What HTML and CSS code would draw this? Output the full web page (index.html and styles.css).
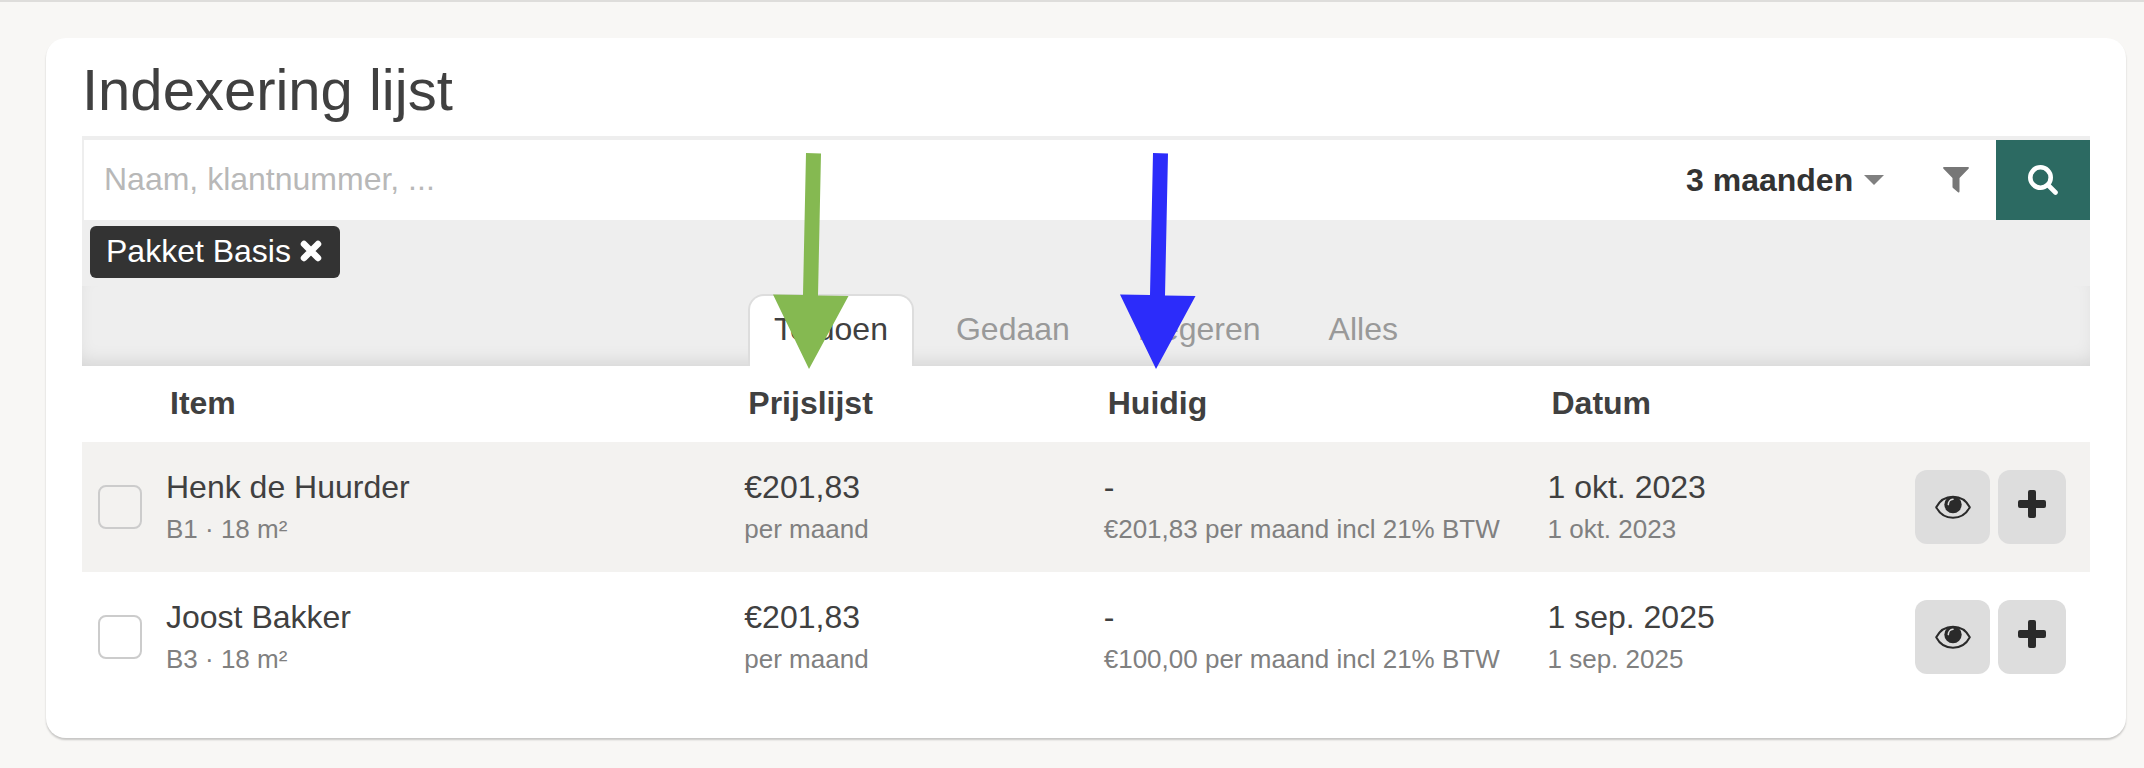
FILE: index.html
```html
<!DOCTYPE html>
<html lang="nl">
  <head>
    <meta charset="UTF-8" />
    <meta name="viewport" content="width=device-width, initial-scale=1.0" />
    <title>Indexering lijst</title>
    <link rel="stylesheet" href="styles.css">
  </head>
  <body>
    <!-- shared icons -->
    <svg class="sprite" aria-hidden="true">
      <symbol id="eye" viewBox="0 0 36 24">
        <path d="M1.2 12.2C8.500-1.900 27.500-1.900 34.800 12.200C27.500 26.200 8.500 26.200 1.200 12.200Z" fill="none" stroke="currentColor" stroke-width="2" stroke-linejoin="round" />
        <circle cx="18" cy="9.600" r="8.700" fill="currentColor" />
        <path d="M13.300 9.600C13.300 6.800 15.200 4.500 18 4.300" fill="none" stroke="#ddd" stroke-width="1.600" stroke-linecap="round" />
      </symbol>
      <symbol id="plus" viewBox="0 0 28 28">
        <path d="M12 0h4a2 2 0 0 1 2 2v8h8a2 2 0 0 1 2 2v4a2 2 0 0 1-2 2h-8v8a2 2 0 0 1-2 2h-4a2 2 0 0 1-2-2v-8H2a2 2 0 0 1-2-2v-4a2 2 0 0 1 2-2h8V2a2 2 0 0 1 2-2z" fill="currentColor" />
      </symbol>
    </svg>

    <main class="card">
      <h1>Indexering lijst</h1>

      <form class="search">
        <input class="search-input" type="text" placeholder="Naam, klantnummer, ..." aria-label="Zoeken" />
        <div class="period">
          <select aria-label="Periode">
            <option>3 maanden</option>
            <option>6 maanden</option>
          </select>
          <svg width="20" height="10" viewBox="0 0 20 10"><path d="M0 0h20L10 10z" fill="#808080" /></svg>
        </div>
        <button class="filter-btn" type="button" aria-label="Filter">
          <svg width="26" height="26" viewBox="0 0 26 26">
            <path d="M1 0h24c1 0 1.200 1 .5 1.700L16.500 11v13.600c0 1-.8 1.300-1.500.700L10 21c-.4-.4-.5-.6-.5-1.200V11L.5 1.700C-.2 1 0 0 1 0z" fill="#777" />
          </svg>
        </button>
        <button class="search-btn" type="submit" aria-label="Zoek">
          <svg width="30" height="30" viewBox="0 0 30 30" fill="none" stroke="#fff">
            <circle cx="12.500" cy="12.500" r="10.200" stroke-width="4.600" />
            <path d="M20 20l7.500 7.500" stroke-width="4.600" stroke-linecap="round" />
          </svg>
        </button>
      </form>

      <div class="tags">
        <button class="tag" type="button">
          Pakket Basis
          <svg width="22" height="22" viewBox="0 0 22 22">
            <path d="M4 4l14 14M18 4L4 18" stroke="#fff" stroke-width="6.500" stroke-linecap="round" />
          </svg>
        </button>
      </div>

      <nav class="tabs">
        <a class="tab active" href="#">Te doen</a>
        <a class="tab" href="#">Gedaan</a>
        <a class="tab" href="#">Negeren</a>
        <a class="tab" href="#">Alles</a>
      </nav>

      <table>
        <thead>
          <tr>
            <th class="col-check"></th>
            <th class="col-item">Item</th>
            <th class="col-price">
              Prijslijst
              <svg class="arrow green" width="76" height="218" viewBox="0 0 76 218">
                <path d="M33 1l15 .5-3 142 30.500.5L36 217 0 142.500l30 .5z" />
              </svg>
            </th>
            <th class="col-current">
              Huidig
              <svg class="arrow blue" width="76" height="218" viewBox="0 0 76 218">
                <path d="M33 1l15 .5-3 142 30.500.5L36 217 0 142.500l30 .5z" />
              </svg>
            </th>
            <th class="col-date">Datum</th>
            <th></th>
          </tr>
        </thead>
        <tbody>
          <tr>
            <td><input type="checkbox" aria-label="Henk de Huurder" /></td>
            <td>Henk de Huurder<small>B1 · 18 m²</small></td>
            <td>€201,83<small>per maand</small></td>
            <td>-<small>€201,83 per maand incl 21% BTW</small></td>
            <td>1 okt. 2023<small>1 okt. 2023</small></td>
            <td>
              <div class="actions">
                <button class="btn-view" type="button" aria-label="Bekijken"><svg width="36" height="24"><use href="#eye" /></svg></button>
                <button class="btn-add" type="button" aria-label="Toevoegen"><svg width="28" height="28"><use href="#plus" /></svg></button>
              </div>
            </td>
          </tr>
          <tr>
            <td><input type="checkbox" aria-label="Joost Bakker" /></td>
            <td>Joost Bakker<small>B3 · 18 m²</small></td>
            <td>€201,83<small>per maand</small></td>
            <td>-<small>€100,00 per maand incl 21% BTW</small></td>
            <td>1 sep. 2025<small>1 sep. 2025</small></td>
            <td>
              <div class="actions">
                <button class="btn-view" type="button" aria-label="Bekijken"><svg width="36" height="24"><use href="#eye" /></svg></button>
                <button class="btn-add" type="button" aria-label="Toevoegen"><svg width="28" height="28"><use href="#plus" /></svg></button>
              </div>
            </td>
          </tr>
        </tbody>
      </table>
    </main>
  </body>
</html>
```
FILE: styles.css
```css
* {
  box-sizing: border-box;
}

body {
  margin: 0;
  padding: 36px 18px 30px 46px;
  border-top: 2px solid #dedddb;
  background-color: #f8f7f5;
  color: #404040;
  font-family: "Liberation Sans", Arial, sans-serif;
  font-size: 32px;
  line-height: 44px;
}

button,
input,
select {
  margin: 0;
  padding: 0;
  border: 0;
  background: none;
  font: inherit;
  color: inherit;
}

svg {
  display: block;
}

.sprite {
  position: absolute;
  width: 0;
  height: 0;
}

.card {
  padding: 16px 36px 36px;
  border-radius: 20px;
  background-color: #fff;
  box-shadow: 0 2px 2px rgba(0, 0, 0, 0.2);
}

h1 {
  margin: 0 0 10px;
  font-size: 58px;
  font-weight: 400;
  line-height: 72px;
}

/* search bar */
.search {
  display: flex;
  align-items: stretch;
  height: 84px;
  border-top: 4px solid #eee;
  border-left: 2px solid #eee;
}

.search-input {
  flex: 1;
  min-width: 0;
  padding: 0 20px 2px;
  outline: none;
}

.search-input::placeholder {
  color: #b8b8b8;
}

.period {
  display: flex;
  align-items: center;
  gap: 10px;
  padding-right: 32px;
}

.period select {
  appearance: none;
  color: #333;
  font-weight: 700;
}

.filter-btn {
  display: flex;
  align-items: center;
  justify-content: center;
  width: 80px;
}

.search-btn {
  display: flex;
  align-items: center;
  justify-content: center;
  width: 94px;
  background-color: #2c6a62;
}

.tags {
  padding: 6px 8px 8px;
  background-color: #eee;
}

.tag {
  display: flex;
  align-items: center;
  gap: 9px;
  height: 52px;
  padding: 0 18px 2px 16px;
  border-radius: 6px;
  background-color: #333;
  color: #fff;
}

.tabs {
  display: flex;
  justify-content: center;
  gap: 16px;
  padding-top: 8px;
  background-color: #eee;
  box-shadow: inset 0 -10px 20px -8px rgba(0, 0, 0, 0.13);
}

.tab {
  padding: 11px 24px 15px;
  border: 2px solid transparent;
  border-bottom: 0;
  border-radius: 16px 16px 0 0;
  color: #999;
  text-decoration: none;
}

.tab.active {
  border-color: #ddd;
  background-color: #fff;
  color: #404040;
}

/* list */
table {
  width: 100%;
  table-layout: fixed;
  border-collapse: collapse;
}

th {
  position: relative;
  padding: 15px 12px 17px;
  text-align: left;
}

td {
  padding: 23px 8px;
  white-space: nowrap;
}

td:first-child {
  padding-left: 16px;
}

td:last-child {
  padding: 0 24px 0 0;
}

tbody tr:nth-child(odd) {
  background-color: #f3f2f0;
}

.col-check {
  width: 76px;
}

.col-item {
  width: 28.8%;
}

.col-price {
  width: 17.9%;
}

.col-current {
  width: 22.1%;
}

.col-date {
  width: 14%;
}

small {
  display: block;
  color: #808080;
  font-size: 26px;
  line-height: 40px;
}

input[type="checkbox"] {
  appearance: none;
  display: block;
  width: 44px;
  height: 44px;
  border: 2px solid #ccc;
  border-radius: 8px;
}

.actions {
  display: flex;
  justify-content: flex-end;
  gap: 8px;
}

.actions button {
  display: flex;
  justify-content: center;
  height: 74px;
  border-radius: 12px;
  background-color: #ddd;
  color: #2a2a2a;
}

.btn-view {
  width: 75px;
  padding-top: 25px;
}

.btn-add {
  width: 68px;
  padding-top: 20px;
}

/* arrows pointing at the price columns */
.arrow {
  position: absolute;
  z-index: 1;
  bottom: 72px;
}

.green {
  left: 37px;
  fill: #85b951;
}

.blue {
  left: 24px;
  fill: #2c2cfa;
}
```
